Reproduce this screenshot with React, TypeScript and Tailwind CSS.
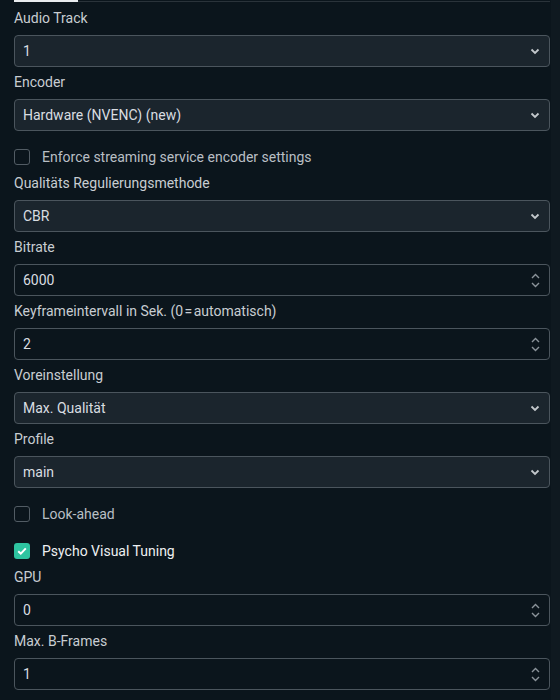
import { type ReactNode } from "react";

type Field =
  | { kind: "select"; label: string; value: string }
  | { kind: "number"; label: string; value: string }
  | { kind: "check"; label: string; checked: boolean };

const fields: Field[] = [
  { kind: "select", label: "Audio Track", value: "1" },
  { kind: "select", label: "Encoder", value: "Hardware (NVENC) (new)" },
  { kind: "check", label: "Enforce streaming service encoder settings", checked: false },
  { kind: "select", label: "Qualitäts Regulierungsmethode", value: "CBR" },
  { kind: "number", label: "Bitrate", value: "6000" },
  { kind: "number", label: "Keyframeintervall in Sek. (0\u200a=\u200aautomatisch)", value: "2" },
  { kind: "select", label: "Voreinstellung", value: "Max. Qualität" },
  { kind: "select", label: "Profile", value: "main" },
  { kind: "check", label: "Look-ahead", checked: false },
  { kind: "check", label: "Psycho Visual Tuning", checked: true },
  { kind: "number", label: "GPU", value: "0" },
  { kind: "number", label: "Max. B-Frames", value: "1" },
];

function ChevronDown() {
  return (
    <svg width="10" height="7" viewBox="0 0 10 7" fill="none" className="text-[#c3c8cc]">
      <path d="M1.5 1.5 5 5l3.5-3.5" stroke="currentColor" strokeWidth="1.8" />
    </svg>
  );
}

function Spinner() {
  return (
    <div className="flex flex-col items-center gap-[3px] text-[#8b939a]">
      <svg width="9" height="6" viewBox="0 0 9 6" fill="none">
        <path d="M1 5 4.5 1.5 8 5" stroke="currentColor" strokeWidth="1.4" />
      </svg>
      <svg width="9" height="6" viewBox="0 0 9 6" fill="none">
        <path d="M1 1 4.5 4.5 8 1" stroke="currentColor" strokeWidth="1.4" />
      </svg>
    </div>
  );
}

function Label({ children }: { children: ReactNode }) {
  return <div className="pt-[5px] pb-[7px] text-[14px] leading-5 text-[#c8cdd2]">{children}</div>;
}

function Box({ filled, children, right }: { filled: boolean; children: ReactNode; right: ReactNode }) {
  return (
    <div
      className={`flex h-8 items-center justify-between rounded-[4px] border border-[#4b555d] pl-[8px] pr-[9px] text-[14px] text-[#d9dde1] ${
        filled ? "bg-[#1b252d]" : "bg-[#0b151c]"
      }`}
    >
      <span>{children}</span>
      {right}
    </div>
  );
}

function CheckRow({ label, checked }: { label: string; checked: boolean }) {
  return (
    <div className={`mb-px flex h-5 items-center gap-3 text-[14px] ${checked ? "mt-[17px]" : "mt-4"}`}>
      {checked ? (
        <span className="flex h-4 w-4 items-center justify-center rounded-[3px] bg-[#2ec4a0]">
          <svg width="10" height="8" viewBox="0 0 10 8" fill="none">
            <path d="M1.2 4.2 3.8 6.6 8.8 1.4" stroke="white" strokeWidth="2" />
          </svg>
        </span>
      ) : (
        <span className="h-4 w-4 rounded-[3px] border border-[#525c64]" />
      )}
      <span className={checked ? "text-[#eef0f2]" : "text-[#b9bfc4]"}>{label}</span>
    </div>
  );
}

export default function App() {
  return (
    <div
      className="flex h-[700px] w-[560px] overflow-hidden bg-[#0b151c]"
      style={{ fontFamily: "Roboto, 'Noto Sans', sans-serif" }}
    >
      <div className="w-[551px] pl-[14px] pr-px">
        <div className="relative h-[3px]">
          <div className="absolute left-0 right-0 top-px h-px bg-[#2a333a]" />
          <div className="absolute left-0 top-0 h-[2px] w-[64px] bg-[#e9ecef]" />
        </div>
        {fields.map((f) =>
          f.kind === "check" ? (
            <CheckRow key={f.label} label={f.label} checked={f.checked} />
          ) : (
            <div key={f.label}>
              <Label>{f.label}</Label>
              <Box filled={f.kind === "select"} right={f.kind === "select" ? <ChevronDown /> : <Spinner />}>
                {f.value}
              </Box>
            </div>
          ),
        )}
      </div>
      <div className="flex-1 bg-[#0f1920]" />
    </div>
  );
}
